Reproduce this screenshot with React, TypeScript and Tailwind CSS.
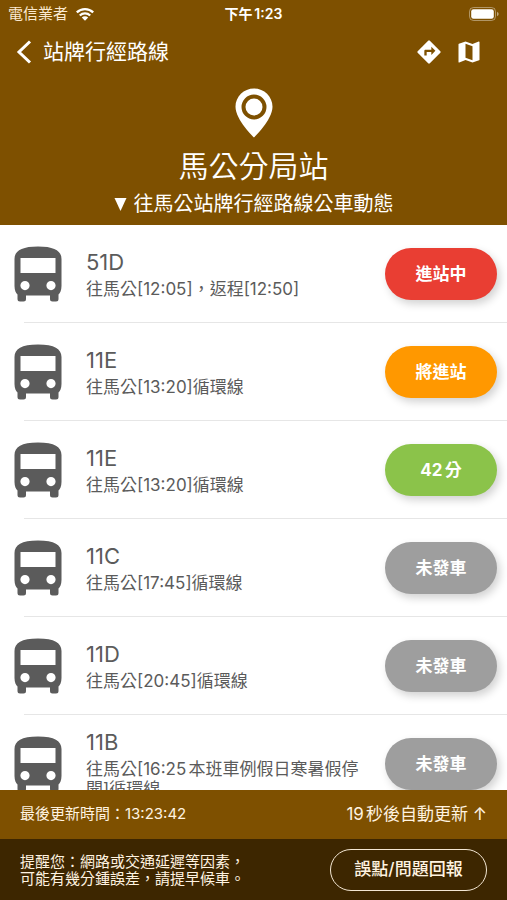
type Route = {
  id: number;
  name: string;
  detail: string;
  status: string;
  color: string;
};

const routes: Route[] = [
  { id: 1, name: "51D", detail: "往馬公[12:05]，返程[12:50]", status: "進站中", color: "bg-[#e93e33]" },
  { id: 2, name: "11E", detail: "往馬公[13:20]循環線", status: "將進站", color: "bg-[#ff9800]" },
  { id: 3, name: "11E", detail: "往馬公[13:20]循環線", status: "42分", color: "bg-[#8bc34a]" },
  { id: 4, name: "11C", detail: "往馬公[17:45]循環線", status: "未發車", color: "bg-[#9e9e9e]" },
  { id: 5, name: "11D", detail: "往馬公[20:45]循環線", status: "未發車", color: "bg-[#9e9e9e]" },
  { id: 6, name: "11B", detail: "往馬公[16:25本班車例假日寒暑假停開]循環線", status: "未發車", color: "bg-[#9e9e9e]" },
];

function BusIcon() {
  return (
    <svg viewBox="0 0 47 56" className="h-14 w-12 shrink-0 text-[#5b5b5b]" fill="currentColor" aria-hidden="true">
      <path
        fillRule="evenodd"
        d="M0 13C0 5 7 0.500 23.500 0.500S47 5 47 13V40C47 44.500 45.500 47 44 48.500V53Q44 55.500 41.500 55.500H38Q35.500 55.500 35.500 53V49.500H11.500V53Q11.500 55.500 9 55.500H5.500Q3 55.500 3 53V48.500C1.500 47 0 44.500 0 40ZM6 12V27H41V12ZM10.500 35A4.600 4.600 0 1 0 10.500 44.200A4.600 4.600 0 1 0 10.500 35ZM36.500 35A4.600 4.600 0 1 0 36.500 44.200A4.600 4.600 0 1 0 36.500 35Z"
      />
    </svg>
  );
}

function PinIcon() {
  return (
    <svg viewBox="0 0 38 50" className="h-[50px] w-[38px]" fill="currentColor" aria-hidden="true">
      <path
        fillRule="evenodd"
        d="M19 0.500C8.800 0.500 0.500 8.600 0.500 18.800C0.500 32 19 49.500 19 49.500S37.500 32 37.500 18.800C37.500 8.600 29.200 0.500 19 0.500ZM19 6.500A12.500 12.500 0 1 1 19 31.500A12.500 12.500 0 1 1 19 6.500Z"
      />
      <circle cx="19" cy="19" r="8.500" />
    </svg>
  );
}

function WifiIcon() {
  return (
    <svg viewBox="0 0 18 14" className="h-3.5 w-[18px]" aria-hidden="true">
      <g fill="none" stroke="currentColor" strokeWidth="2.300">
        <path d="M0.800 5.400A11.800 11.800 0 0 1 17.200 5.400" />
        <path d="M3.800 8.500A7.500 7.500 0 0 1 14.200 8.500" />
      </g>
      <path d="M9 13.800L5.800 10.600A4.600 4.600 0 0 1 12.200 10.600Z" fill="currentColor" />
    </svg>
  );
}

function BatteryIcon() {
  return (
    <svg viewBox="0 0 30 14" className="h-3.5 w-[30px]" aria-hidden="true">
      <rect x="0.500" y="0.500" width="26" height="13" rx="4" fill="none" stroke="#fff" strokeOpacity="0.400" />
      <rect x="2.200" y="2.200" width="22.600" height="9.600" rx="2.300" fill="#fff" />
      <path d="M28 4.800Q29.700 5.600 29.700 7T28 9.200Z" fill="#fff" fillOpacity="0.500" />
    </svg>
  );
}

export default function App() {
  return (
    <div className="flex h-screen flex-col overflow-hidden bg-white font-['Inter','Noto_Sans_CJK_TC',sans-serif] [text-autospace:normal]">
      <header className="shrink-0 bg-[#7e5000] text-white">
        <div className="grid h-7 grid-cols-[1fr_auto_1fr] items-center px-2 text-sm">
          <div className="flex items-center gap-2">
            <span className="text-[15px] text-[#fbe9d0]">電信業者</span>
            <WifiIcon />
          </div>
          <span className="font-semibold">下午1:23</span>
          <div className="flex justify-end">
            <BatteryIcon />
          </div>
        </div>
        <nav className="flex h-12 items-center pr-6 pl-3">
          <button type="button" aria-label="返回" className="flex h-10 w-[31px] items-center">
            <svg viewBox="0 0 24 24" className="size-6" fill="none" stroke="currentColor" strokeWidth="3" aria-hidden="true">
              <path d="M18 1.500L7 12L18 22.500" />
            </svg>
          </button>
          <h1 className="flex-1 text-[21px] leading-7">站牌行經路線</h1>
          <div className="flex items-center gap-3">
            <button type="button" aria-label="路線規劃">
              <svg viewBox="0 0 24 24" className="size-7" fill="currentColor" aria-hidden="true">
                <path d="M21.710 11.290l-9-9a.996.996 0 0 0-1.410 0l-9 9a.996.996 0 0 0 0 1.410l9 9c.390.390 1.020.390 1.410 0l9-9a.996.996 0 0 0 0-1.410zM14 14.500V12h-4v3H8v-4c0-.550.450-1 1-1h5V7.500l3.500 3.500-3.500 3.500z" />
              </svg>
            </button>
            <button type="button" aria-label="地圖">
              <svg viewBox="0 0 24 24" className="size-7" fill="currentColor" aria-hidden="true">
                <path d="M20.500 3l-.160.030L15 5.100 9 3 3.360 4.900c-.210.070-.360.250-.360.480V20.500c0 .280.220.500.500.500l.160-.030L9 18.900l6 2.100 5.640-1.900c.210-.070.360-.250.360-.480V3.500c0-.280-.220-.500-.500-.500zM15 19l-6-2.110V5l6 2.110V19z" />
              </svg>
            </button>
          </div>
        </nav>
        <div className="flex flex-col items-center pt-3 pb-[7px]">
          <PinIcon />
          <h2 className="mt-2 text-[30px] leading-10 font-[350]">馬公分局站</h2>
          <p className="mt-1 flex items-center gap-[7px] text-xl leading-7">
            <svg viewBox="0 0 13 13" className="size-[13px]" fill="currentColor" aria-hidden="true">
              <path d="M0.500 0H12.500L6.500 13Z" />
            </svg>
            往馬公站牌行經路線公車動態
          </p>
        </div>
      </header>

      <main className="min-h-0 flex-1 overflow-hidden">
        <ul>
          {routes.map((route) => (
            <li key={route.id}>
              <div className="flex h-[97px] items-center pr-2.5 pl-3.5">
                <BusIcon />
                <div className="ml-6 min-w-0 flex-1 pr-3.5 text-[#5b5b5b]">
                  <h3 className="text-[22px] leading-7">{route.name}</h3>
                  <p className="mt-[3px] text-[17px] leading-5">{route.detail}</p>
                </div>
                <button
                  type="button"
                  className={`h-[52px] w-28 shrink-0 rounded-full pt-0.5 text-[17px] font-bold text-white shadow-[3px_4px_8px_rgba(0,0,0,0.18)] ${route.color}`}
                >
                  {route.status}
                </button>
              </div>
              <div className="ml-6 h-px bg-[#e6e6e6]" />
            </li>
          ))}
        </ul>
      </main>

      <footer className="shrink-0">
        <div className="flex h-[49px] items-center justify-between bg-[#7e5000] px-5 text-[#fff3e0]">
          <p className="text-[15px]">最後更新時間：13:23:42</p>
          <button type="button" className="text-[17px]">19秒後自動更新 ↑</button>
        </div>
        <div className="flex h-[61px] items-center justify-between bg-[#3d2600] px-5 text-[#fff3e0]">
          <p className="text-[15px] leading-[17px]">
            提醒您：網路或交通延遲等因素，
            <br />
            可能有幾分鍾誤差，請提早候車。
          </p>
          <button type="button" className="h-[42px] w-[157px] shrink-0 rounded-full border border-[#f3e6d3] text-[17px] font-medium">
            誤點/問題回報
          </button>
        </div>
      </footer>
    </div>
  );
}
